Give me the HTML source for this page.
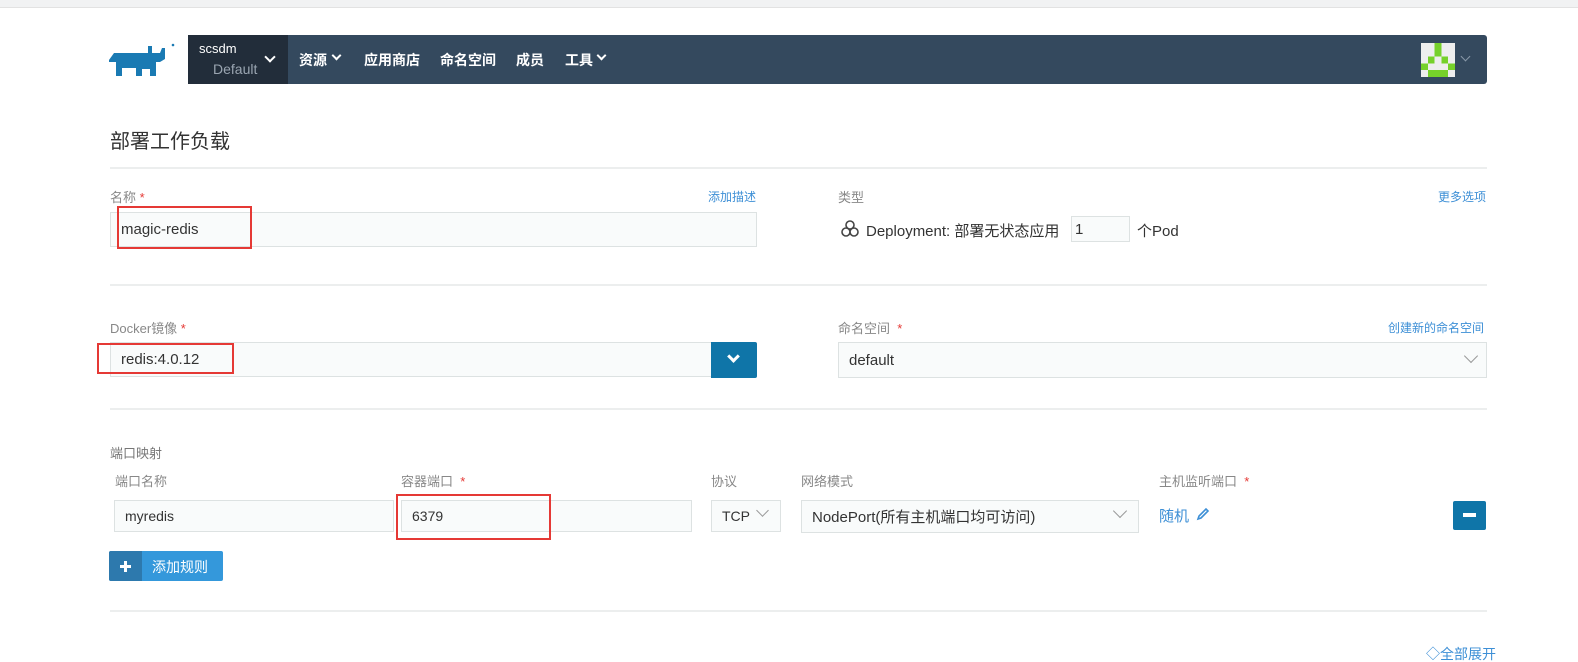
<!DOCTYPE html>
<html><head><meta charset="utf-8"><style>
*{box-sizing:border-box;margin:0;padding:0}
body{width:1578px;height:658px;overflow:hidden;background:#fff;font-family:"Liberation Sans","Noto Sans CJK SC",sans-serif;color:#333;position:relative}
.a{position:absolute}
.lbl{font-size:13px;color:#888}
.req{color:#e53935}
.inp{position:absolute;border:1px solid #dde2e2;background:#f9fbfb;font-size:15px;color:#333;padding-left:10px;display:flex;align-items:center}
.hr{position:absolute;left:110px;width:1377px;height:2px;background:#eceeee}
.link{color:#3d8fd6;font-size:12px}
.rb{position:absolute;border:2px solid #e53935}
.chev{position:absolute;width:10px;height:10px;border-right:1.5px solid #999;border-bottom:1.5px solid #999;transform:rotate(45deg)}
</style></head><body>
<div class="a" style="left:0;top:0;width:1578px;height:8px;background:#f1f2f3;border-bottom:1px solid #e2e2e2"></div>
<svg class="a" style="left:108px;top:42px" width="70" height="36" viewBox="0 0 70 36"><path d="M1 18 L6 11 H40 V4 H44 V11 H52 L54 6 H57 V17 L52 20 H48 V34 H42 V27 H34 V34 H28 V26 H14 V34 H8 V20 H1 Z" fill="#1a7ab3"/><circle cx="65" cy="3" r="1.3" fill="#1a7ab3"/></svg>
<div class="a" style="left:188px;top:35px;width:1299px;height:49px;background:#34495e;border-radius:0 3px 3px 0"></div>
<div class="a" style="left:188px;top:35px;width:100px;height:49px;background:#222d3a"></div>
<div class="a" style="left:199px;top:41px;color:#fff;font-size:13px">scsdm</div>
<div class="a" style="left:213px;top:61px;color:#9aa5b1;font-size:14px">Default</div>
<div class="a" style="left:266px;top:53px;width:8px;height:8px;border-right:2.5px solid #fff;border-bottom:2.5px solid #fff;transform:rotate(45deg)"></div>
<div class="a" style="left:299px;top:50px;color:#fff;font-size:14px;font-weight:bold">资源</div>
<div class="a" style="left:333px;top:52px;width:7px;height:7px;border-right:2.5px solid #fff;border-bottom:2.5px solid #fff;transform:rotate(45deg)"></div>
<div class="a" style="left:364px;top:50px;color:#fff;font-size:14px;font-weight:bold">应用商店</div>
<div class="a" style="left:440px;top:50px;color:#fff;font-size:14px;font-weight:bold">命名空间</div>
<div class="a" style="left:516px;top:50px;color:#fff;font-size:14px;font-weight:bold">成员</div>
<div class="a" style="left:565px;top:50px;color:#fff;font-size:14px;font-weight:bold">工具</div>
<div class="a" style="left:598px;top:52px;width:7px;height:7px;border-right:2.5px solid #fff;border-bottom:2.5px solid #fff;transform:rotate(45deg)"></div>
<svg class="a" style="left:1421px;top:43px" width="34" height="34" viewBox="0 0 5 5" shape-rendering="crispEdges"><rect width="5" height="5" fill="#eee"/><g fill="#76d12a"><rect x="2" y="0" width="1" height="2"/><rect x="1" y="2" width="1" height="1"/><rect x="3" y="2" width="1" height="1"/><rect x="0" y="3" width="1" height="1"/><rect x="4" y="3" width="1" height="1"/><rect x="1" y="4" width="3" height="1"/></g></svg>
<div class="a" style="left:1462px;top:53px;width:7px;height:7px;border-right:1.5px solid #8898a8;border-bottom:1.5px solid #8898a8;transform:rotate(45deg)"></div>

<div class="a" style="left:110px;top:125px;font-size:20px;color:#333">部署工作负载</div>
<div class="hr" style="top:167px"></div>

<div class="a lbl" style="left:110px;top:187px">名称 <span class="req">*</span></div>
<div class="a link" style="left:708px;top:188px">添加描述</div>
<div class="inp" style="left:110px;top:212px;width:647px;height:35px">magic-redis</div>
<div class="rb" style="left:117px;top:206px;width:135px;height:43px"></div>
<div class="a lbl" style="left:838px;top:187px">类型</div>
<div class="a link" style="left:1438px;top:188px">更多选项</div>
<svg class="a" style="left:840px;top:219px" width="20" height="20" viewBox="0 0 20 20" fill="none" stroke="#444" stroke-width="1.6"><circle cx="10" cy="6" r="4"/><circle cx="6" cy="13" r="4"/><circle cx="14" cy="13" r="4"/></svg>
<div class="a" style="left:866px;top:220px;font-size:15px;color:#333">Deployment: 部署无状态应用</div>
<div class="inp" style="left:1071px;top:216px;width:59px;height:26px;padding-left:3px">1</div>
<div class="a" style="left:1137px;top:220px;font-size:15px;color:#333">个Pod</div>

<div class="hr" style="top:284px"></div>

<div class="a lbl" style="left:110px;top:318px">Docker镜像 <span class="req">*</span></div>
<div class="inp" style="left:110px;top:342px;width:602px;height:35px">redis:4.0.12</div>
<div class="a" style="left:711px;top:342px;width:46px;height:36px;background:#0f75a8;border-radius:0 2px 2px 0"></div>
<div class="a" style="left:729px;top:352px;width:9px;height:9px;border-right:3px solid #fff;border-bottom:3px solid #fff;transform:rotate(45deg)"></div>
<div class="rb" style="left:97px;top:343px;width:137px;height:31px"></div>
<div class="a lbl" style="left:838px;top:318px">命名空间 <span class="req">&nbsp;*</span></div>
<div class="a link" style="left:1388px;top:319px">创建新的命名空间</div>
<div class="inp" style="left:838px;top:342px;width:649px;height:36px">default</div>
<div class="chev" style="left:1466px;top:351px"></div>

<div class="hr" style="top:408px"></div>

<div class="a lbl" style="left:110px;top:443px;color:#777">端口映射</div>
<div class="a lbl" style="left:115px;top:471px">端口名称</div>
<div class="a lbl" style="left:401px;top:471px">容器端口 <span class="req">&nbsp;*</span></div>
<div class="a lbl" style="left:711px;top:471px">协议</div>
<div class="a lbl" style="left:801px;top:471px">网络模式</div>
<div class="a lbl" style="left:1159px;top:471px">主机监听端口 <span class="req">&nbsp;*</span></div>
<div class="inp" style="left:114px;top:500px;width:280px;height:32px;font-size:14px">myredis</div>
<div class="inp" style="left:401px;top:500px;width:291px;height:32px;font-size:14px">6379</div>
<div class="rb" style="left:396px;top:494px;width:155px;height:46px"></div>
<div class="inp" style="left:711px;top:500px;width:70px;height:32px;font-size:14px">TCP</div>
<div class="chev" style="left:758px;top:506px;width:9px;height:9px"></div>
<div class="inp" style="left:801px;top:500px;width:338px;height:33px;font-size:15px">NodePort(所有主机端口均可访问)</div>
<div class="chev" style="left:1115px;top:506px"></div>
<div class="a" style="left:1159px;top:505px;font-size:15px;color:#3d8fd6">随机</div>
<svg class="a" style="left:1196px;top:507px" width="14" height="14" viewBox="0 0 14 14"><path d="M2 12 L3 9 L10 2 L12 4 L5 11 Z" fill="none" stroke="#3d8fd6" stroke-width="1.6"/></svg>
<div class="a" style="left:1453px;top:501px;width:33px;height:29px;background:#0f75a8;border-radius:2px"></div>
<div class="a" style="left:1463px;top:513px;width:13px;height:4px;background:#fff"></div>

<div class="a" style="left:109px;top:551px;width:114px;height:30px;background:#3498db;border-radius:2px"></div>
<div class="a" style="left:109px;top:551px;width:33px;height:30px;background:#2d79ad;border-radius:2px 0 0 2px"></div>
<div class="a" style="left:120px;top:565px;width:11px;height:3px;background:#fff"></div>
<div class="a" style="left:124px;top:561px;width:3px;height:11px;background:#fff"></div>
<div class="a" style="left:152px;top:557px;font-size:14px;color:#fff">添加规则</div>

<div class="hr" style="top:610px"></div>
<div class="a link" style="left:1426px;top:647px;font-size:14px;line-height:14px">◇全部展开</div>
</body></html>
